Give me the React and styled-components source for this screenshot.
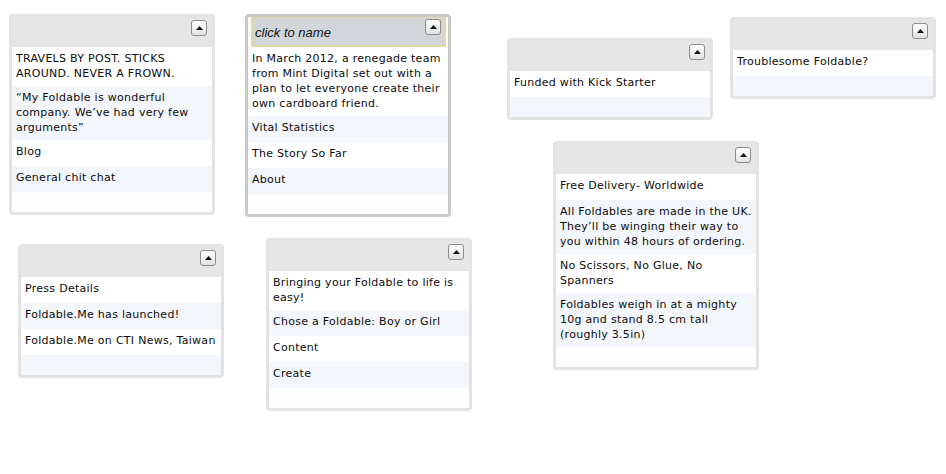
import styled, { createGlobalStyle, css } from 'styled-components';

const GlobalStyle = createGlobalStyle`
	html,
	body {
		margin: 0;
		padding: 0;
		background: #ffffff;
	}
	body {
		font-family: 'DejaVu Sans', Verdana, sans-serif;
	}
`;

const cards = [
	{
		x: 9,
		y: 14,
		items: [
			'TRAVELS BY POST. STICKS AROUND. NEVER A FROWN.',
			'\u201cMy Foldable is wonderful company. We\u2019ve had very few arguments\u201d',
			'Blog',
			'General chit chat',
		],
	},
	{
		x: 245,
		y: 14,
		selected: true,
		title: 'click to name',
		items: [
			'In March 2012, a renegade team from Mint Digital set out with a plan to let everyone create their own cardboard friend.',
			'Vital Statistics',
			'The Story So Far',
			'About',
		],
	},
	{ x: 507, y: 38, items: ['Funded with Kick Starter'] },
	{ x: 730, y: 17, items: ['Troublesome Foldable?'] },
	{
		x: 18,
		y: 244,
		items: ['Press Details', 'Foldable.Me has launched!', 'Foldable.Me on CTI News, Taiwan'],
	},
	{
		x: 266,
		y: 238,
		items: ['Bringing your Foldable to life is easy!', 'Chose a Foldable: Boy or Girl', 'Content', 'Create'],
	},
	{
		x: 553,
		y: 141,
		items: [
			'Free Delivery- Worldwide',
			'All Foldables are made in the UK. They\u2019ll be winging their way to you within 48 hours of ordering.',
			'No Scissors, No Glue, No Spanners',
			'Foldables weigh in at a mighty 10g and stand 8.5 cm tall (roughly 3.5in)',
		],
	},
];

const UpIcon = () => (
	<svg width="7" height="4" viewBox="0 0 7 4">
		<path d="M0 4 L3.5 0 L7 4 Z" fill="#111111" />
	</svg>
);

const App = () => {
	return (
		<>
			<GlobalStyle />
			<Board>
				{cards.map((card, i) => (
					<Card key={i} $x={card.x} $y={card.y} $selected={card.selected}>
						<Header $selected={card.selected}>
							<Title>{card.title}</Title>
							<Toggle type="button">
								<UpIcon />
							</Toggle>
						</Header>
						<List>
							{card.items.map((text, j) => (
								<Row key={j} $alt={j % 2 === 1}>
									{text}
								</Row>
							))}
							<Filler $alt={card.items.length % 2 === 1} />
						</List>
					</Card>
				))}
			</Board>
		</>
	);
};

export default App;

const Board = styled.div`
	position: relative;
	width: 946px;
	height: 474px;
	overflow: hidden;
`;

const Card = styled.div`
	position: absolute;
	left: ${(p) => p.$x}px;
	top: ${(p) => p.$y}px;
	width: 206px;
	box-sizing: border-box;
	border: 3px solid ${(p) => (p.$selected ? '#c9c9c9' : '#e3e3e3')};
	border-radius: 4px;
	background-color: #fdfdfd;
	overflow: hidden;
`;

const Header = styled.div`
	display: flex;
	align-items: flex-start;
	justify-content: space-between;
	height: 30px;
	box-sizing: border-box;
	padding: 2px 5px 0 5px;
	background-color: #e6e6e6;

	${(p) =>
		p.$selected &&
		css`
			background-color: #d2d6da;
			padding: 0 3px 0 2px;
			border: 2px solid #e2d9a4;
			border-top-width: 1px;
			margin: 0 2px 0 3px;
			height: 30px;
		`}
`;

const Title = styled.span`
	padding-top: 7px;
	font-family: 'Liberation Sans', Arial, sans-serif;
	font-size: 13px;
	font-style: italic;
	color: #111111;
`;

const Toggle = styled.button`
	display: flex;
	align-items: center;
	justify-content: center;
	width: 16px;
	height: 16px;
	margin: 0;
	padding: 0;
	border: 1px solid #8c8c8c;
	border-radius: 3px;
	background: linear-gradient(#ffffff, #e2e2e2);
	cursor: pointer;
	margin-top: 1px;
`;

const List = styled.div`
	display: flex;
	flex-direction: column;
`;

const Row = styled.div`
	box-sizing: border-box;
	min-height: 26px;
	padding: 4px 3px 5px 4px;
	font-size: 11px;
	line-height: 15px;
	letter-spacing: 0.28px;
	color: #0c0c0c;
	background-color: ${(p) => (p.$alt ? '#f3f6fb' : '#ffffff')};
`;

const Filler = styled.div`
	height: 20px;
	background-color: ${(p) => (p.$alt ? '#f3f6fb' : '#fdfdfd')};
`;
